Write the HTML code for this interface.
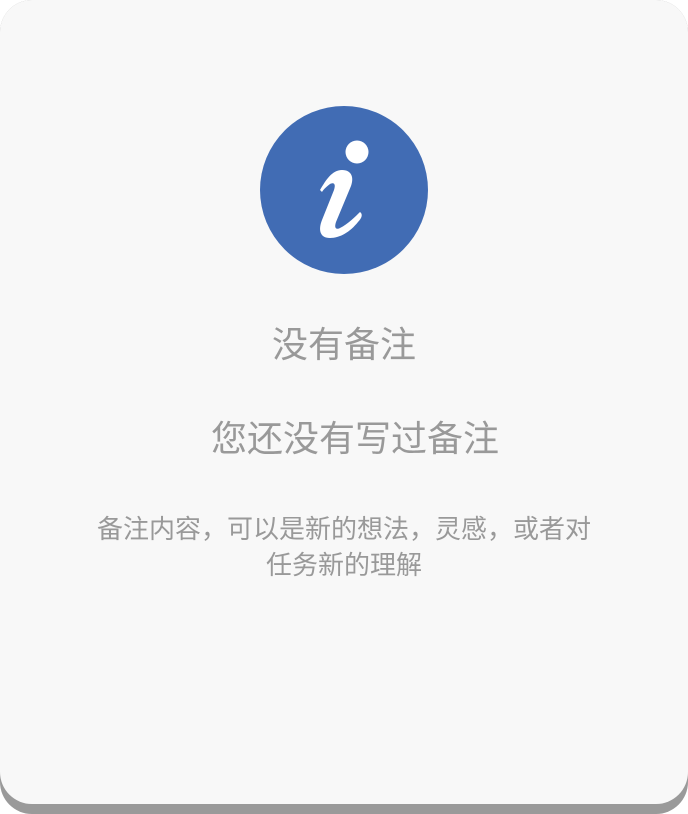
<!DOCTYPE html>
<html><head><meta charset="utf-8"><style>
html,body{margin:0;padding:0;background:#fff;width:688px;height:814px;overflow:hidden;}
.shadow{position:absolute;left:0;top:0;width:688px;height:814px;border-radius:32px;background:#9a9a9a;}
.card{position:absolute;left:0;top:0;width:688px;height:804px;border-radius:32px;background:#f8f8f8;}
.t{position:absolute;left:0;width:688px;text-align:center;color:#999;font-family:"Liberation Sans","Noto Sans CJK SC",sans-serif;white-space:nowrap;box-sizing:border-box;}
</style></head><body>
<div class="shadow"></div>
<div class="card"></div>
<svg style="position:absolute;left:0;top:0" width="688" height="814">
<circle cx="344" cy="190" r="84" fill="#416cb4"/>
<circle cx="357" cy="152" r="11.5" fill="#fff"/>
<path fill="#fff" d="M320,190 C326,180 332,170 342,170 C352,170 354,178 351,186 L336,222 C334,228 336,230 340,228 C348,224 356,216 360,212 C363,214 362,218 358,222 C350,232 340,238 330,238 C320,238 318,230 322,220 L334,190 C336,184 334,182 330,184 C326,187 323,190 322,192 Z"/>
</svg>
<div class="t" style="top:322px;font-size:36px;line-height:46px;">没有备注</div>
<div class="t" style="top:416px;font-size:36px;line-height:46px;padding-left:22px;">您还没有写过备注</div>
<div class="t" style="top:511px;font-size:26px;line-height:36px;">备注内容，可以是新的想法，灵感，或者对<br>任务新的理解</div>
</body></html>
